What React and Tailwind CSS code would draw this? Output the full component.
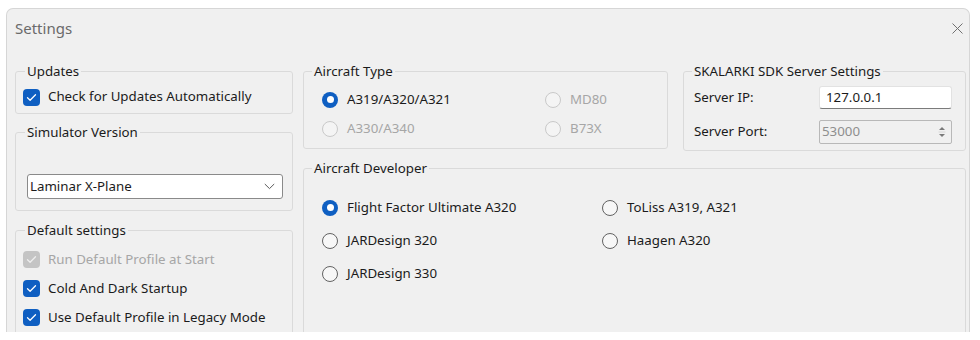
import React from 'react'

const font = { fontFamily: '"Segoe UI", "Noto Sans", "Liberation Sans", sans-serif' }

function Check({ checked = true, disabled = false, label }) {
  return (
    <label className="flex items-center h-[29px] gap-[8px]">
      <span
        className={`w-[17px] h-[17px] rounded-[4px] flex items-center justify-center shrink-0 ${
          disabled ? 'bg-[#c4c4c4]' : 'bg-[#0f5fc2]'
        }`}
      >
        {checked && (
          <svg width="11" height="9" viewBox="0 0 11 9" fill="none">
            <path
              d="M1.5 4.8 L4.1 7.2 L9.5 1.8"
              stroke={disabled ? '#eeeeee' : '#ffffff'}
              strokeWidth="1.3"
              strokeLinecap="round"
              strokeLinejoin="round"
            />
          </svg>
        )}
      </span>
      <span className={disabled ? 'text-[#a6a6a6]' : 'text-[#1b1b1b]'}>{label}</span>
    </label>
  )
}

function Radio({ checked = false, disabled = false, label }) {
  let ring = 'border border-[#626262] bg-[#f7f7f7]'
  if (checked) ring = 'bg-[#0f5fc2]'
  if (disabled) ring = 'border border-[#c9c9c9] bg-[#f4f4f4]'
  return (
    <div className="flex items-center gap-[9px]">
      <span className={`w-[16px] h-[16px] rounded-full flex items-center justify-center shrink-0 ${ring}`}>
        {checked && <span className="w-[7px] h-[7px] rounded-full bg-white" />}
      </span>
      <span className={disabled ? 'text-[#a6a6a6]' : 'text-[#1b1b1b]'}>{label}</span>
    </div>
  )
}

function Group({ title, className = '', legendClass = '', children }) {
  return (
    <fieldset className={`border border-[#dadada] rounded-[3px] ${className}`}>
      <legend className={`px-[2px] leading-[20px] text-[#1b1b1b] ${legendClass}`}>{title}</legend>
      {children}
    </fieldset>
  )
}

export default function App() {
  return (
    <div className="w-[980px] h-[340px] bg-white pt-[8px] pl-[6px] text-[13.3px]" style={font}>
      <div className="w-[964px] h-[324px] bg-[#f0f0f0] border-l border-t border-r border-[#d6d6d6] rounded-t-[7px] overflow-hidden">
        {/* title bar */}
        <div className="h-[38px] flex items-center justify-between pl-[8px] pr-[6px]">
          <span className="text-[15px] text-[#6a6a6a]">Settings</span>
          <svg width="11" height="11" viewBox="0 0 11 11" fill="none">
            <path d="M0.5 0.5 L10.5 10.5 M10.5 0.5 L0.5 10.5" stroke="#707070" strokeWidth="1" />
          </svg>
        </div>

        <div className="flex gap-[10px] pl-[8px] pt-[14px]">
          {/* left column */}
          <div className="w-[278px] flex flex-col">
            <Group title="Updates" className="pl-[7px]" legendClass="ml-[2px]">
              <div className="h-[32px] flex items-center">
                <Check label="Check for Updates Automatically" />
              </div>
            </Group>

            <Group title="Simulator Version" className="mt-[8px] pl-[7px] pt-[32px] pb-[11px]" legendClass="ml-[2px]">
              <div className="ml-[4px] w-[256px] h-[25px] bg-white border border-[#8a8a8a] rounded-[3px] flex items-center justify-between pl-[2px] pr-[7px]">
                <span className="text-[#1b1b1b]">Laminar X-Plane</span>
                <svg width="11" height="7" viewBox="0 0 11 7" fill="none">
                  <path d="M0.8 1 L5.5 5.6 L10.2 1" stroke="#5a5a5a" strokeWidth="1" />
                </svg>
              </div>
            </Group>

            <Group title="Default settings" className="mt-[9px] pl-[7px] pt-[5px] pb-[20px]" legendClass="ml-[2px]">
              <Check disabled label="Run Default Profile at Start" />
              <Check label="Cold And Dark Startup" />
              <Check label="Use Default Profile in Legacy Mode" />
            </Group>
          </div>

          {/* right area */}
          <div className="w-[663px] flex flex-col">
            <div className="flex gap-[15px] items-start">
              <Group title="Aircraft Type" className="w-[365px] pl-[8px] pt-[4px] pb-[5px]">
                <div className="ml-[10px] grid grid-cols-[223px_1fr]">
                  <div className="h-[29px] flex items-center"><Radio checked label="A319/A320/A321" /></div>
                  <div className="h-[29px] flex items-center"><Radio disabled label="MD80" /></div>
                  <div className="h-[29px] flex items-center"><Radio disabled label="A330/A340" /></div>
                  <div className="h-[29px] flex items-center"><Radio disabled label="B73X" /></div>
                </div>
              </Group>

              <Group title="SKALARKI SDK Server Settings" className="w-[283px] pl-[8px] pt-[5px] pb-[6px]">
                <div className="flex items-center h-[23px]">
                  <span className="w-[127px] pl-[2px] text-[#1b1b1b]">Server IP:</span>
                  <div className="w-[133px] h-[23px] bg-white border border-[#e2e2e2] border-b-[#7b7b7b] rounded-[3px] flex items-center pl-[6px] text-[#1b1b1b]">
                    127.0.0.1
                  </div>
                </div>
                <div className="flex items-center h-[24px] mt-[11px]">
                  <span className="w-[127px] pl-[2px] text-[#1b1b1b]">Server Port:</span>
                  <div className="w-[133px] h-[24px] bg-[#f0f0f0] border border-[#b8b8b8] rounded-[2px] flex items-center justify-between pl-[2px] pr-[5px] text-[#8e8e8e]">
                    <span>53000</span>
                    <svg width="8" height="14" viewBox="0 0 8 14" fill="none">
                      <path d="M1 5 L4 2 L7 5 Z" fill="#7a7a7a" />
                      <path d="M0.5 7 H7.5" stroke="#d0d0d0" strokeWidth="0.8" />
                      <path d="M1 9 L4 12 L7 9 Z" fill="#7a7a7a" />
                    </svg>
                  </div>
                </div>
              </Group>
            </div>

            <Group title="Aircraft Developer" className="mt-[7px] h-[200px] pl-[8px] pt-[13px]">
              <div className="ml-[10px] grid grid-cols-[280px_1fr]">
                <div className="h-[33px] flex items-center"><Radio checked label="Flight Factor Ultimate A320" /></div>
                <div className="h-[33px] flex items-center"><Radio label="ToLiss A319, A321" /></div>
                <div className="h-[33px] flex items-center"><Radio label="JARDesign 320" /></div>
                <div className="h-[33px] flex items-center"><Radio label="Haagen A320" /></div>
                <div className="h-[33px] flex items-center"><Radio label="JARDesign 330" /></div>
              </div>
            </Group>
          </div>
        </div>
      </div>
    </div>
  )
}
